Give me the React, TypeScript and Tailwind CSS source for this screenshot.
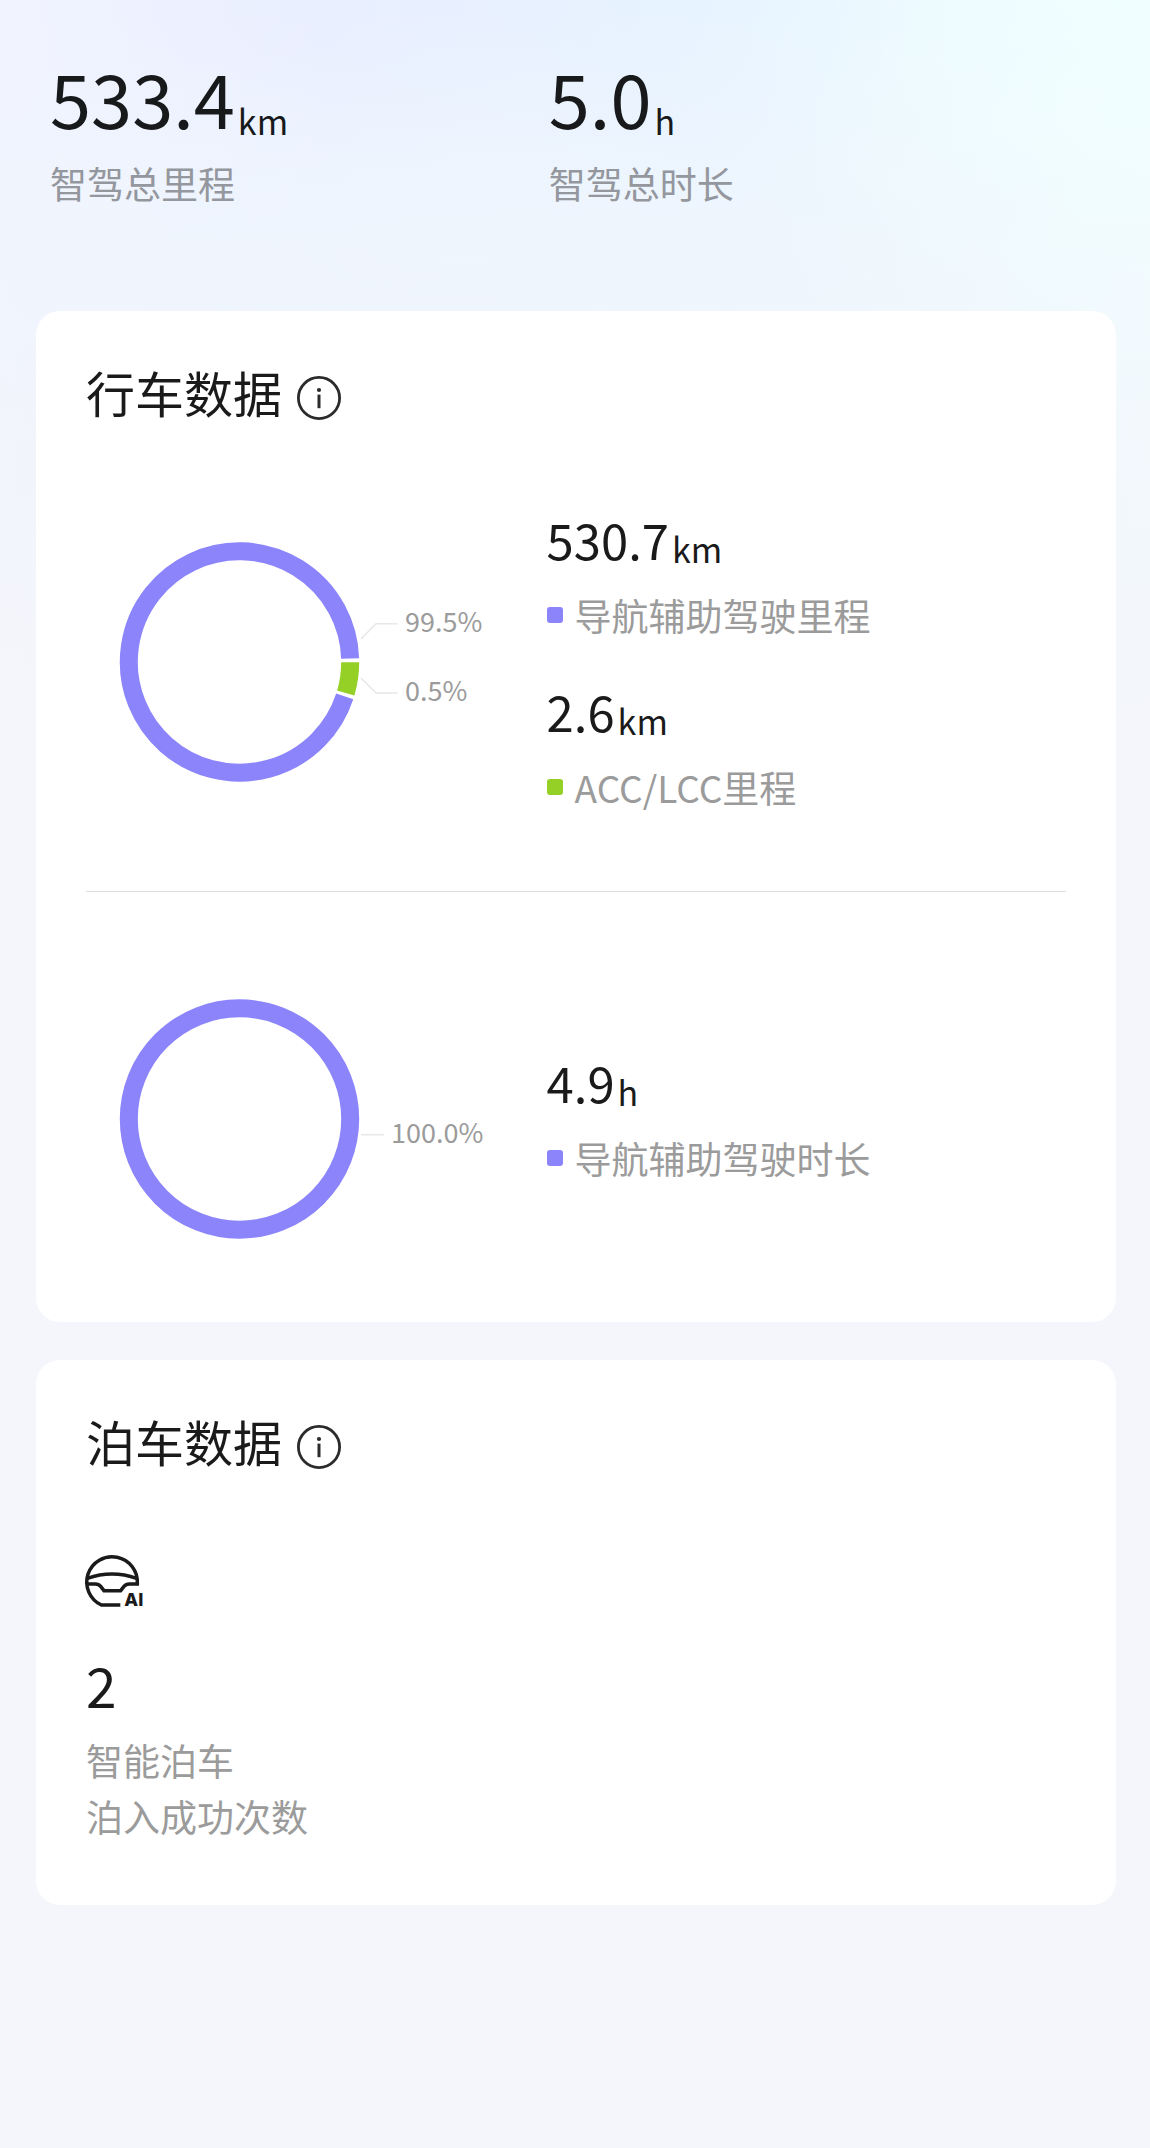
import React from "react";

const PURPLE = "#8b84fb";
const GREEN = "#95d027";

function InfoButton({ label }: { label: string }) {
  return (
    <button type="button" aria-label={label} className="mt-3 block shrink-0 cursor-pointer text-[#2b2b2b]">
      <svg viewBox="0 0 44 44" className="size-11" fill="none" aria-hidden="true">
        <circle cx="22" cy="22" r="20.6" stroke="currentColor" strokeWidth="2.8" />
        <circle cx="22" cy="14" r="2.1" fill="currentColor" />
        <path d="M22 18.6V32.2" stroke="currentColor" strokeWidth="3" />
      </svg>
    </button>
  );
}

function CardTitle({ children }: { children: string }) {
  return (
    <div className="flex items-center gap-[15px]">
      <h2 className="text-[49px] leading-[60px] text-[#1a1a1a]">{children}</h2>
      <InfoButton label={`${children}说明`} />
    </div>
  );
}

function Total({ value, unit, label }: { value: string; unit: string; label: string }) {
  return (
    <div>
      <div className="flex items-end gap-[3px] text-[#17191b]">
        <span className="text-[74px] leading-[88px]">{value}</span>
        <span className="text-[34px] leading-[40px]">{unit}</span>
      </div>
      <p className="mt-[18px] text-[37px] leading-[48px] text-[#94979d]">{label}</p>
    </div>
  );
}

function Metric({ value, unit, label, dot }: { value: string; unit: string; label: string; dot: string }) {
  return (
    <div>
      <div className="flex items-end gap-[3px] text-[#1a1a1a]">
        <span className="text-[49px] leading-[60px]">{value}</span>
        <span className="text-[34px] leading-[40px]">{unit}</span>
      </div>
      <div className="mt-[22px] flex items-center gap-3">
        <span className={`size-4 shrink-0 rounded-[3px] ${dot}`} />
        <span className="text-[37px] leading-[48px] text-[#9b9b9b]">{label}</span>
      </div>
    </div>
  );
}

const CX = 153.5;
const CY = 120;
const R = 110.7;

function arc(from: number, to: number) {
  const at = (deg: number) => {
    const a = (deg * Math.PI) / 180;
    return `${(CX + R * Math.cos(a)).toFixed(2)} ${(CY + R * Math.sin(a)).toFixed(2)}`;
  };
  return `M${at(from)} A${R} ${R} 0 ${to - from > 180 ? 1 : 0} 1 ${at(to)}`;
}

function DistanceChart() {
  return (
    <svg viewBox="0 -4 414 244" className="w-[414px] max-w-full" fill="none" role="img" aria-label="行车里程占比">
      <path d={arc(18.1, 358.2)} stroke={PURPLE} strokeWidth="18" />
      <path d={arc(0.1, 16.3)} stroke={GREEN} strokeWidth="18" />
      <g stroke="#e8e8e8" strokeWidth="1.6">
        <path d="M275 97L290 81.7H311.5" />
        <path d="M275 136L290 151H311.5" />
      </g>
      <g fill="#9b9b9b" fontSize="27">
        <text x="319" y="90">99.5%</text>
        <text x="319" y="159">0.5%</text>
      </g>
    </svg>
  );
}

function DurationChart() {
  return (
    <svg viewBox="0 -4 414 244" className="w-[414px] max-w-full" fill="none" role="img" aria-label="行车时长占比">
      <circle cx={CX} cy={CY} r={R} stroke={PURPLE} strokeWidth="18" />
      <path d="M275 135.7H298" stroke="#e8e8e8" strokeWidth="1.6" />
      <text x="305" y="144" fill="#9b9b9b" fontSize="27">100.0%</text>
    </svg>
  );
}

function ParkingIcon() {
  return (
    <svg viewBox="78 464 180 168" className="h-14 w-[60px] overflow-visible" fill="none" aria-hidden="true">
      <g stroke="#1a1a1a" strokeWidth="10.5">
        <path d="M181 614H124A76 76 0 1 1 232 551H208C200 551 196 553 192 558L182 571H132L122 558C118 553 112 551 106 551H80" />
        <path d="M82 534Q156 508 230 534" />
      </g>
      <text x="193" y="617" fontSize="54" fontWeight="800" fill="#1a1a1a" className="font-['Inter',sans-serif]">AI</text>
    </svg>
  );
}

export default function App() {
  return (
    <main className="min-h-screen bg-[#f4f6fb] bg-[linear-gradient(to_bottom,transparent_0px,#f4f6fb_720px),radial-gradient(ellipse_400px_420px_at_100%_120px,#f0ffff,transparent),radial-gradient(ellipse_900px_220px_at_40%_260px,#edf6ff,transparent),linear-gradient(to_right,#f1f3ff_0%,#e9efff_28%,#e7f3ff_60%,#effcff_100%)] font-['Noto_Sans_CJK_SC',sans-serif]">
      <header className="grid grid-cols-[475fr_525fr] px-[50px] pt-[53px]">
        <Total value="533.4" unit="km" label="智驾总里程" />
        <Total value="5.0" unit="h" label="智驾总时长" />
      </header>

      <div className="mt-[104px] flex flex-col gap-[38px] pr-[34px] pl-9">
        <section className="rounded-3xl bg-white px-[50px] pt-[51px] pb-[83px]">
          <CardTitle>行车数据</CardTitle>
          <div className="mt-[87px] grid grid-cols-[47fr_53fr] items-center border-b border-[#dedede] pb-[80px]">
            <DistanceChart />
            <div className="flex flex-col gap-[42px]">
              <Metric value="530.7" unit="km" label="导航辅助驾驶里程" dot="bg-[#8b84fb]" />
              <Metric value="2.6" unit="km" label="ACC/LCC里程" dot="bg-[#95d027]" />
            </div>
          </div>
          <div className="grid grid-cols-[47fr_53fr] items-center pt-[103px]">
            <DurationChart />
            <Metric value="4.9" unit="h" label="导航辅助驾驶时长" dot="bg-[#8b84fb]" />
          </div>
        </section>

        <section className="rounded-3xl bg-white px-[50px] pt-[51px] pb-[61px]">
          <CardTitle>泊车数据</CardTitle>
          <div className="mt-[84px]">
            <ParkingIcon />
            <p className="mt-[41px] text-[55px] leading-[64px] text-[#1a1a1a]">2</p>
            <p className="mt-4 text-[37px] leading-[56px] text-[#9b9b9b]">
              智能泊车
              <br />
              泊入成功次数
            </p>
          </div>
        </section>
      </div>
    </main>
  );
}
